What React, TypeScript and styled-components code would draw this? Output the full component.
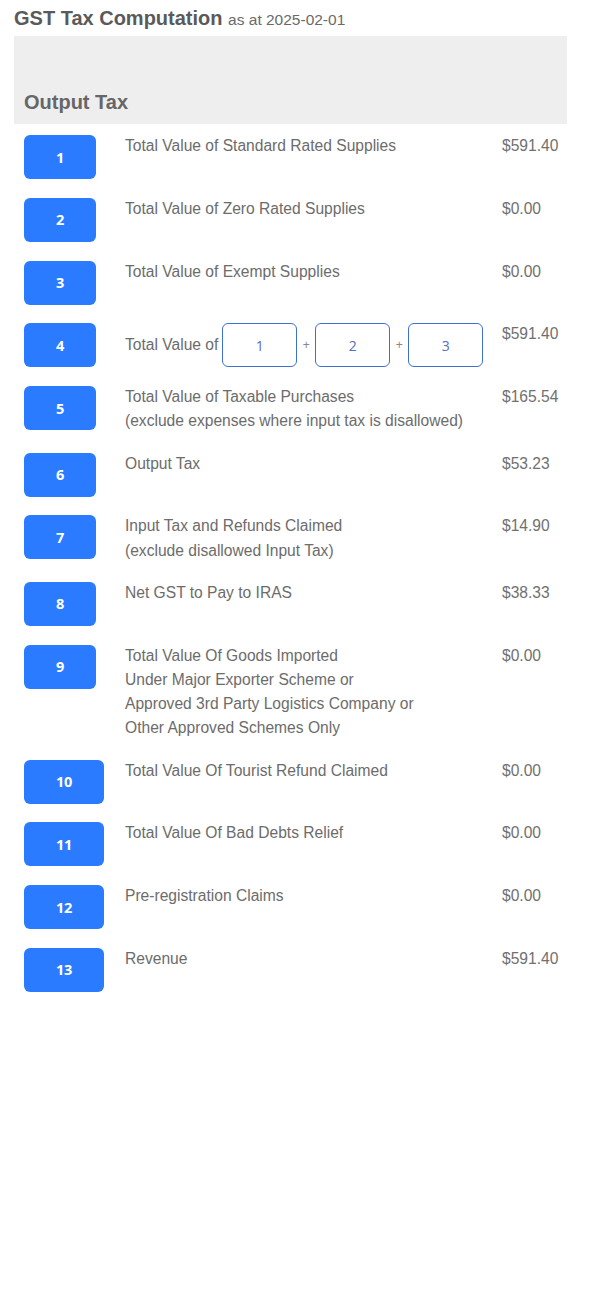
import React from 'react';
import styled, { createGlobalStyle } from 'styled-components';

type Line = {
  no: string;
  label: string[];
  value: string;
};

const LINES: Line[] = [
  { no: '1', label: ['Total Value of Standard Rated Supplies'], value: '$591.40' },
  { no: '2', label: ['Total Value of Zero Rated Supplies'], value: '$0.00' },
  { no: '3', label: ['Total Value of Exempt Supplies'], value: '$0.00' },
  { no: '4', label: [], value: '$591.40' },
  {
    no: '5',
    label: [
      'Total Value of Taxable Purchases',
      '(exclude expenses where input tax is disallowed)',
    ],
    value: '$165.54',
  },
  { no: '6', label: ['Output Tax'], value: '$53.23' },
  {
    no: '7',
    label: ['Input Tax and Refunds Claimed', '(exclude disallowed Input Tax)'],
    value: '$14.90',
  },
  { no: '8', label: ['Net GST to Pay to IRAS'], value: '$38.33' },
  {
    no: '9',
    label: [
      'Total Value Of Goods Imported',
      'Under Major Exporter Scheme or',
      'Approved 3rd Party Logistics Company or',
      'Other Approved Schemes Only',
    ],
    value: '$0.00',
  },
  { no: '10', label: ['Total Value Of Tourist Refund Claimed'], value: '$0.00' },
  { no: '11', label: ['Total Value Of Bad Debts Relief'], value: '$0.00' },
  { no: '12', label: ['Pre-registration Claims'], value: '$0.00' },
  { no: '13', label: ['Revenue'], value: '$591.40' },
];

export default function App() {
  return (
    <>
      <GlobalStyle />
      <Page>
        <Title>
          GST Tax Computation <AsAt>as at 2025-02-01</AsAt>
        </Title>
        <SectionHeader>Output Tax</SectionHeader>
        <List>
          {LINES.map((line) => (
            <Row key={line.no}>
              <BadgeCell>
                <Badge>{line.no}</Badge>
              </BadgeCell>
              {line.no === '4' ? (
                <SumLabel>
                  <SumText>Total Value of</SumText>
                  <RefBox>1</RefBox>
                  <Plus>+</Plus>
                  <RefBox>2</RefBox>
                  <Plus>+</Plus>
                  <RefBox>3</RefBox>
                </SumLabel>
              ) : (
                <Label>
                  {line.label.map((text) => (
                    <div key={text}>{text}</div>
                  ))}
                </Label>
              )}
              <Value>{line.value}</Value>
            </Row>
          ))}
        </List>
      </Page>
    </>
  );
}

const GlobalStyle = createGlobalStyle`
  body {
    margin: 0;
    background: #ffffff;
    font-family: "Liberation Sans", Arial, sans-serif;
  }
`;

const Page = styled.div`
  width: 553px;
  padding: 6px 0 0 14px;
`;

const Title = styled.div`
  font-size: 20px;
  font-weight: bold;
  line-height: 24px;
  color: #5a5a5a;
  margin-bottom: 4px;
  white-space: nowrap;
`;

const AsAt = styled.span`
  font-size: 15.5px;
  font-weight: normal;
  color: #6a6a6a;
`;

const SectionHeader = styled.div`
  background: #eeeeee;
  padding: 54px 10px 10px;
  font-size: 20px;
  font-weight: bold;
  line-height: 24px;
  color: #666666;
`;

const List = styled.div`
  display: flex;
  flex-direction: column;
  gap: 18.8px;
  padding: 11px 0 0 10px;
`;

const Row = styled.div`
  display: grid;
  grid-template-columns: 101px 377px 1fr;
  align-items: start;
  min-height: 44px;
`;

const BadgeCell = styled.div`
  display: flex;
`;

const Badge = styled.div`
  height: 44px;
  padding: 0 32px;
  display: flex;
  align-items: center;
  justify-content: center;
  background: #2a7bff;
  border-radius: 6px;
  color: #ffffff;
  font-family: "Open Sans", sans-serif;
  font-size: 14.5px;
  font-weight: 700;
  letter-spacing: -0.3px;
`;

const Label = styled.div`
  font-size: 15.6px;
  line-height: 24.3px;
  color: #6c6c6c;
  margin-top: -1px;
`;

const SumLabel = styled.div`
  display: flex;
  align-items: center;
  height: 44px;
  font-size: 15.6px;
  color: #6c6c6c;
  white-space: nowrap;
`;

const SumText = styled.span`
  margin-right: 4px;
`;

const RefBox = styled.div`
  height: 44px;
  width: 75px;
  box-sizing: border-box;
  display: flex;
  align-items: center;
  justify-content: center;
  border: 1.5px solid #3d70d2;
  border-radius: 6px;
  background: #ffffff;
  color: #5a6cc2;
  font-family: "Open Sans", sans-serif;
  font-size: 14px;
`;

const Plus = styled.span`
  width: 18px;
  text-align: center;
  font-size: 12px;
  color: #888888;
`;

const Value = styled.div`
  font-size: 15.6px;
  line-height: 24.3px;
  color: #707070;
  margin-top: -1px;
  white-space: nowrap;
`;
